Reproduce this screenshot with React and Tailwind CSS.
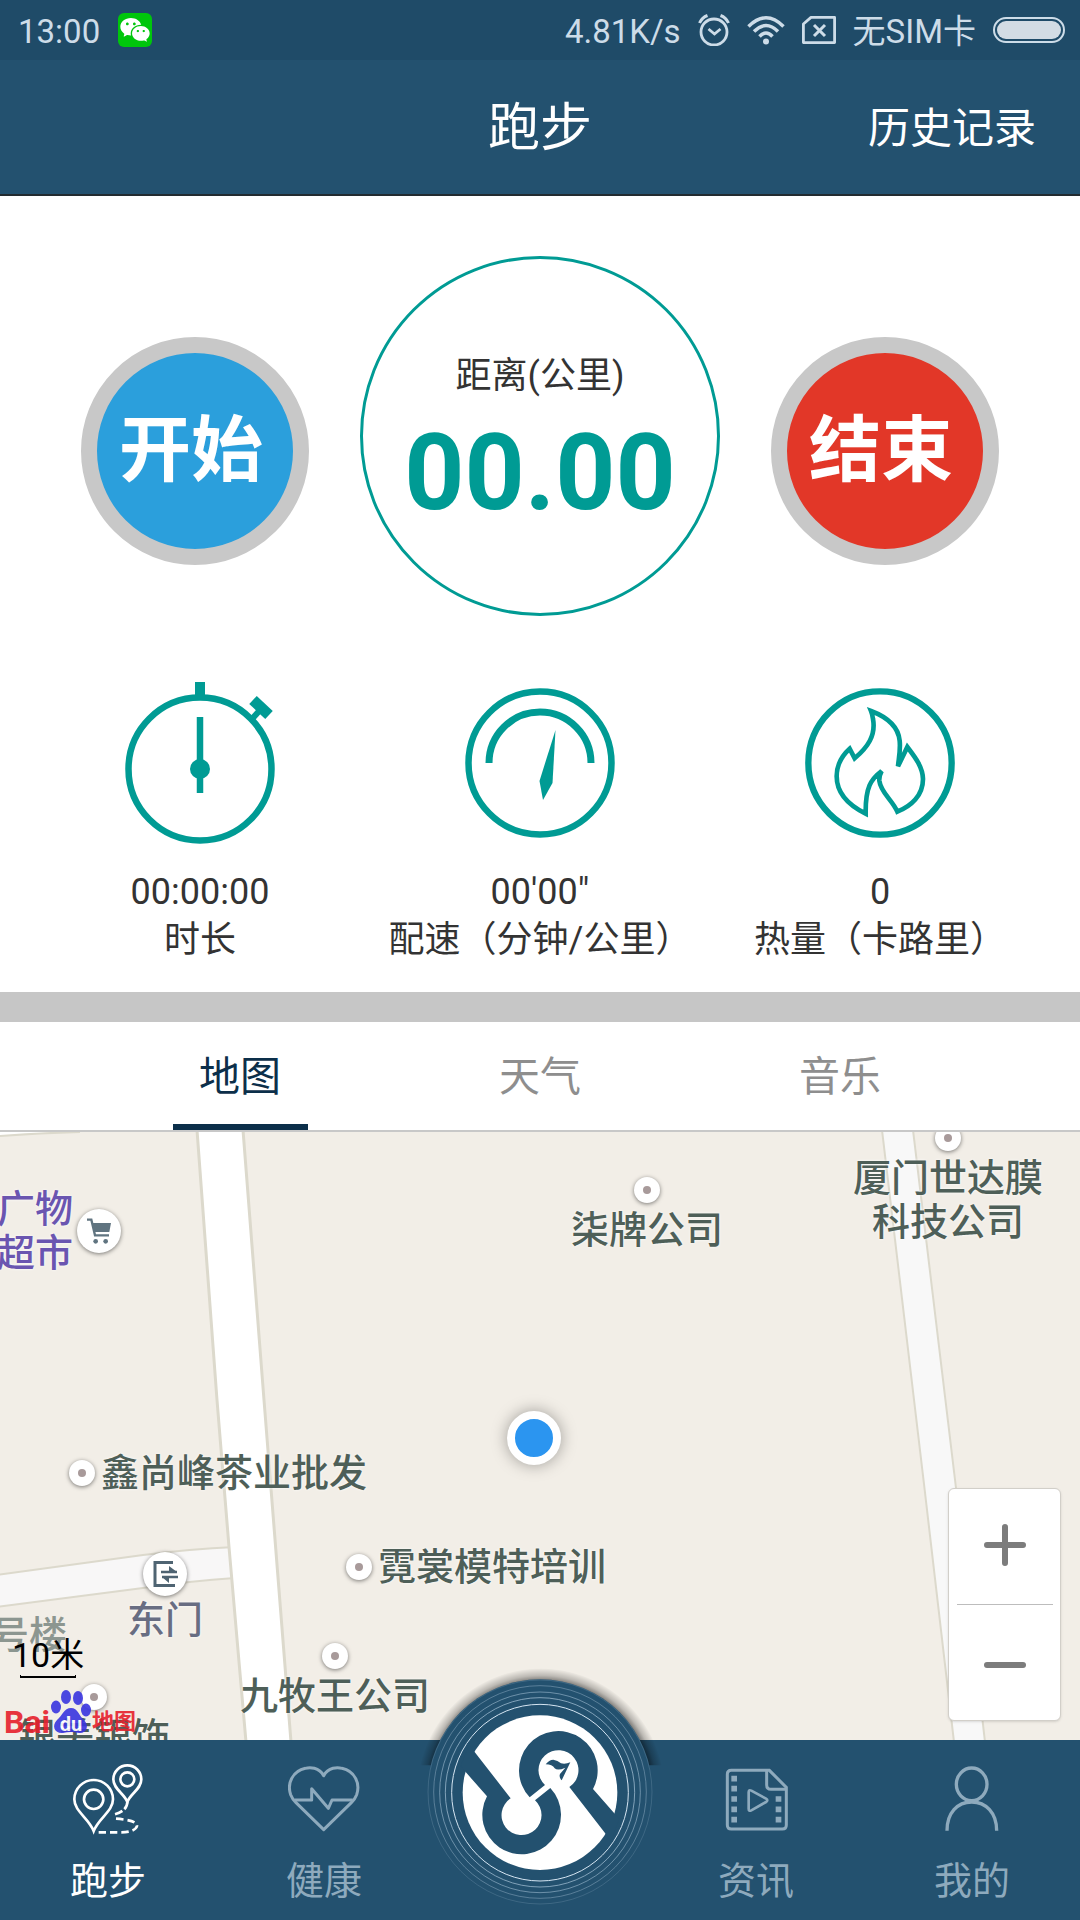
import React, { useState } from 'react';
import { RiWechatFill } from 'react-icons/ri';

const MAP_W = 1080;
const MAP_H = 608;

const places = [
  { name: ['广物', '超市'], x: 99, y: 99, side: 'left', kind: 'shop', color: 'text-[#6a55b0]' },
  { name: ['柒牌公司'], x: 647, y: 58, side: 'below' },
  { name: ['厦门世达膜', '科技公司'], x: 948, y: 6, side: 'below' },
  { name: ['鑫尚峰茶业批发'], x: 82, y: 341, side: 'right' },
  { name: ['霓裳模特培训'], x: 359, y: 435, side: 'right' },
  { name: ['九牧王公司'], x: 335, y: 524, side: 'below' },
  { name: ['东门'], x: 165, y: 442, side: 'below', kind: 'gate', color: 'text-[#686d82]' },
  { name: ['银美银饰'], x: 94, y: 565, side: 'below' },
];

const labelSides = {
  left: 'right-[26px] -translate-y-1/2 text-right',
  right: 'left-[19px] -translate-y-1/2',
  below: 'top-[18px] -translate-x-1/2 text-center',
  belowLarge: 'top-6 -translate-x-1/2 text-center',
};

function AlarmIcon() {
  return (
    <svg viewBox="0 0 32 32" className="size-8" fill="none" stroke="currentColor" strokeWidth="2.8">
      <circle cx="16" cy="18" r="13" />
      <path d="M10.500 15l6 5 6-5" />
      <path d="M1.5 9Q4 3.500 9.500 1.500M30.500 9Q28 3.500 22.500 1.500" strokeWidth="3" />
    </svg>
  );
}

function WifiIcon() {
  return (
    <svg viewBox="0 0 38 30" className="h-[30px] w-[38px]" fill="none" stroke="currentColor" strokeWidth="3.500">
      <path d="M1.500 11.500Q19-6 36.500 11.500" />
      <path d="M7 16.500Q19 4.500 31 16.500" />
      <path d="M12.500 21.500Q19 14.500 25.500 21.500" />
      <circle cx="19" cy="26.500" r="3" fill="currentColor" stroke="none" />
    </svg>
  );
}

function NoSimIcon() {
  return (
    <svg viewBox="0 0 34 28" className="h-7 w-[34px]" fill="none" stroke="currentColor" strokeWidth="2.8">
      <path d="M9 1.400H32.600V26.600H1.400V8Z" strokeLinejoin="round" />
      <path d="M12 9l11 11M23 9L12 20" strokeWidth="3" />
    </svg>
  );
}

function CartIcon() {
  return (
    <svg viewBox="0 0 72 78" className="h-[26px] w-6" fill="none" stroke="currentColor" strokeWidth="7">
      <path d="M0 5H13L24 52H66" />
      <path d="M14 15H72L67 42H21Z" fill="currentColor" stroke="none" />
      <circle cx="26" cy="70" r="7" fill="currentColor" stroke="none" />
      <circle cx="56" cy="70" r="7" fill="currentColor" stroke="none" />
    </svg>
  );
}

function StopwatchIcon() {
  return (
    <svg viewBox="0 0 168 168" className="size-[168px]" fill="none" stroke="#009b94" strokeWidth="6.500">
      <circle cx="84" cy="90" r="71.500" />
      <path d="M84 3V18" strokeWidth="10" />
      <path d="M84 38V114" />
      <circle cx="84" cy="90" r="10" fill="#009b94" stroke="none" />
      <path d="M135 41L145 30" strokeWidth="6" />
      <path d="M137 21L153 36" strokeWidth="11" />
    </svg>
  );
}

function GaugeIcon() {
  return (
    <svg viewBox="0 0 168 168" className="size-[168px]" fill="none" stroke="#009b94" strokeWidth="6.500">
      <circle cx="84" cy="84" r="71.500" />
      <path d="M33 84A51 51 0 0 1 135 84" strokeWidth="7" />
      <path d="M99.500 51L96.500 104L87 121L83.500 102Z" fill="#009b94" stroke="none" />
    </svg>
  );
}

function FlameIcon() {
  return (
    <svg viewBox="0 0 504 504" className="size-[168px]" fill="none" stroke="#009b94" strokeWidth="14">
      <circle cx="252" cy="252" r="215" strokeWidth="19" />
      <path d="M225 96C262 110 306 136 311 185C314 215 308 240 306 262L334 204C360 238 380 265 381 300C381 350 345 382 304 398C288 362 254 340 250 305Q249 290 257 276C225 300 208 325 209 404C160 380 122 345 122 292C122 255 140 228 161 209L176 238C215 205 240 170 231 120Q229 106 225 96Z" />
    </svg>
  );
}

function RouteIcon() {
  return (
    <svg viewBox="0 0 216 216" className="size-[72px]" fill="none" stroke="currentColor" strokeWidth="8">
      <path d="M65 204C50 165 7 145 7 109A58 58 0 0 1 123 109C123 145 80 165 65 204Z" />
      <circle cx="65" cy="109" r="29" />
      <path d="M166 117C157 92 124 78 124 49A42 42 0 0 1 208 49C208 78 175 92 166 117Z" />
      <circle cx="166" cy="49" r="21" />
      <path d="M166 117Q166 143 128 154" strokeDasharray="24 8" />
      <path d="M132 167Q196 172 195 189Q190 207 148 208L76 208" strokeDasharray="22 12" />
    </svg>
  );
}

function HeartIcon() {
  return (
    <svg viewBox="0 0 216 216" className="size-[72px]" fill="none" stroke="currentColor" strokeWidth="9" strokeLinejoin="round">
      <path d="M107 38C93 12 65 12 52 16C15 24-4 60 8 95Q13 108 24 119L107 200L190 119Q201 108 206 95C218 60 199 24 162 16C149 12 121 12 107 38Z" />
      <path d="M20 111H71V77L121 136L132 111H194" />
    </svg>
  );
}

function FilmIcon() {
  return (
    <svg viewBox="0 0 216 216" className="size-[72px]" fill="none" stroke="currentColor" strokeWidth="9">
      <path d="M148 22H34Q22 22 22 34V186Q22 198 34 198H187Q199 198 199 186V73Z" />
      <path d="M140 22V66Q140 79 153 79H199" />
      <path d="M86 88Q86 79 94 83L138 107Q146 112 138 117L94 142Q86 146 86 137Z" strokeWidth="8" />
      <path d="M34 47H51M34 77H51M34 108H51M34 139H51M34 170H51M167 108H184M167 139H184M167 170H184" strokeWidth="17" />
    </svg>
  );
}

function PersonIcon() {
  return (
    <svg viewBox="0 0 216 216" className="size-[72px]" fill="none" stroke="currentColor" strokeWidth="10">
      <ellipse cx="107" cy="64" rx="46" ry="49" />
      <path d="M33 203C33 150 64 117 107 117S182 150 182 203" />
    </svg>
  );
}

function BrandLogo() {
  // Drawn once and turned half a circle for the other hook
  const hook = 'M386 471A118 118 0 1 1 576 446L655 536L630 601L505 440A60 60 0 1 0 432 434Z';
  return (
    <svg viewBox="78 116 678 678" className="size-[226px] overflow-visible">
      <defs>
        <radialGradient id="discShadow" gradientUnits="userSpaceOnUse" cx="420" cy="455" r="372">
          <stop offset="0.880" stopColor="#000" stopOpacity="0.600" />
          <stop offset="0.940" stopColor="#000" stopOpacity="0.220" />
          <stop offset="1" stopColor="#000" stopOpacity="0" />
        </radialGradient>
      </defs>
      <path d="M57 375A372 372 0 0 1 783 375Z" fill="url(#discShadow)" />
      <circle cx="417" cy="455" r="338" fill="#23516f" />
      <g fill="none" stroke="#a9c4d8" strokeWidth="3">
        <circle cx="417" cy="455" r="336" opacity="0.200" />
        <circle cx="417" cy="455" r="319" opacity="0.400" />
        <circle cx="417" cy="456" r="301" opacity="0.550" />
        <circle cx="417" cy="456" r="284" opacity="0.700" />
        <circle cx="417" cy="457" r="265" stroke="#d5e5f2" />
      </g>
      <circle cx="417" cy="457" r="232" fill="#fff" />
      <path d={hook} fill="#23516f" />
      <path d={hook} fill="#23516f" transform="rotate(180 417 457)" />
      <path d="M434 372Q444 358 457 358Q470 360 480 369Q494 372 508 366L482 420Q473 410 477 401L493 382Q470 392 461 384Q454 372 434 372Z" fill="#23516f" />
    </svg>
  );
}

function Marker({ kind }) {
  const box = 'absolute flex -translate-x-1/2 -translate-y-1/2 items-center justify-center rounded-full bg-white shadow-[0_1px_4px_rgba(0,0,0,0.5)]';
  if (kind === 'shop') {
    return (
      <span className={`${box} size-11 text-[#607480]`}>
        <CartIcon />
      </span>
    );
  }
  if (kind === 'gate') {
    return (
      <span className={`${box} size-11 text-[#4f6472]`}>
        <svg viewBox="0 0 28 28" className="size-7" fill="none" stroke="currentColor" strokeWidth="3">
          <path d="M22 2.500H4V25.500H24" />
          <path d="M10 12H26M11 17H27" strokeWidth="2.500" />
          <path d="M18 6L26 12H18ZM18 17V23L11 17Z" fill="currentColor" stroke="none" />
        </svg>
      </span>
    );
  }
  return (
    <span className={`${box} size-[26px]`}>
      <span className="size-2 rounded-full bg-[#a89a9a]" />
    </span>
  );
}

function Place({ place }) {
  const side = place.kind === 'gate' ? 'belowLarge' : place.side;
  return (
    <div
      className="absolute"
      style={{ left: `${(place.x / MAP_W) * 100}%`, top: `${(place.y / MAP_H) * 100}%` }}
    >
      <Marker kind={place.kind} />
      <p
        className={`absolute text-[38px] leading-[44px] font-medium whitespace-nowrap [text-shadow:0_0_3px_#fff] ${labelSides[side]} ${place.color || 'text-[#4e5f58]'}`}
      >
        {place.name.map((line) => (
          <span key={line} className="block">{line}</span>
        ))}
      </p>
    </div>
  );
}

function BaiduMark() {
  return (
    <div className="flex items-end text-[#e6202c] opacity-90">
      <span className="text-[32px] leading-6 font-bold">Bai</span>
      <span className="relative flex h-11 w-[42px] items-end justify-center">
        <svg viewBox="0 0 42 44" className="absolute inset-0 size-full" fill="#3a35e0">
          <ellipse cx="6" cy="17" rx="5" ry="6.500" />
          <ellipse cx="16" cy="7" rx="5" ry="7" />
          <ellipse cx="28" cy="8" rx="5" ry="7" />
          <ellipse cx="36" cy="20" rx="5" ry="6.500" />
          <path d="M21 18C28 18 29 26 34 30C40 36 36 44 29 43Q21 41 13 43C5 44 1 36 7 30C12 26 14 18 21 18Z" />
        </svg>
        <span className="relative text-[20px] leading-5 font-bold text-white">du</span>
      </span>
      <span className="text-[22px] leading-6 font-bold">地图</span>
    </div>
  );
}

function MapView() {
  return (
    <section className="relative min-h-[608px] flex-1 overflow-hidden bg-[#f2eee7]">
      <svg viewBox="0 0 1080 608" preserveAspectRatio="none" className="absolute inset-0 size-full">
        <path d="M0 0H80Q40 0 0 4Z" fill="#fff" />
        <path d="M0 4Q40 1 80 0" fill="none" stroke="#dcd9cc" strokeWidth="2" />
        <path d="M-4 443L143 423Q190 417 235 415V446Q190 449 143 456L-4 475Z" fill="#f8f7f7" stroke="#dcd9cc" strokeWidth="2" />
        <path d="M882-2L924 352L954 610H985L956 356L913-2Z" fill="#f8f8f8" stroke="#dcd9cc" strokeWidth="2" />
        <path d="M197-2L217 268L229 415L246 610H291L264 268L243-2Z" fill="#fff" stroke="#dcd9cc" strokeWidth="3" />
      </svg>

      <p className="absolute top-[481px] -left-[9px] text-[38px] leading-[44px] font-medium text-[#8c9690]">号楼</p>
      {places.map((place) => (
        <Place key={place.name[0]} place={place} />
      ))}

      {/* Current position */}
      <span className="absolute top-[50.400%] left-[49.400%] size-[54px] -translate-x-1/2 -translate-y-1/2 rounded-full border-8 border-white bg-[#2b95f0] shadow-[0_0_16px_rgba(0,0,0,0.35)]" />

      {/* Scale and map provider */}
      <div className="absolute bottom-1.5 left-1">
        <div className="ml-2 w-fit text-[34px] leading-10 text-black">
          10米
          <div className="ml-2 h-[3px] w-14 border-x border-b-2 border-black" />
        </div>
        <div className="mt-3">
          <BaiduMark />
        </div>
      </div>

      <div className="absolute right-[19px] bottom-[19px] flex w-[113px] flex-col items-center rounded-md border border-[#d2cfc9] bg-white text-[#7c7c7c] shadow-sm">
        <button type="button" aria-label="放大" className="flex h-[115px] w-full items-center justify-center pb-1">
          <svg viewBox="0 0 42 42" className="size-[42px]" stroke="currentColor" strokeWidth="6" strokeLinecap="round">
            <path d="M3 21H39M21 3V39" />
          </svg>
        </button>
        <div className="h-px w-24 bg-[#bdbdbd]" />
        <button type="button" aria-label="缩小" className="flex h-[115px] w-full items-center justify-center pt-1">
          <svg viewBox="0 0 42 42" className="size-[42px]" stroke="currentColor" strokeWidth="6" strokeLinecap="round">
            <path d="M3 21H39" />
          </svg>
        </button>
      </div>
    </section>
  );
}

function StatusBar() {
  return (
    <div className="flex h-[60px] items-center justify-between bg-[#1f4b68] pr-[15px] pl-[18px] text-[33px] leading-none text-[#cddce8]">
      <div className="flex items-center gap-[18px]">
        <span className="pt-0.5">13:00</span>
        <span className="flex size-[34px] items-center justify-center rounded-md bg-[#00c60c] text-white">
          <RiWechatFill className="size-8" />
        </span>
      </div>
      <div className="flex items-center gap-[17px]">
        <span className="pt-0.5">4.81K/s</span>
        <AlarmIcon />
        <WifiIcon />
        <NoSimIcon />
        <span className="pt-0.5">无SIM卡</span>
        <span className="h-[26px] w-[72px] rounded-full border-2 border-current p-0.5">
          <span className="block size-full rounded-full bg-[#d3dce4]" />
        </span>
      </div>
    </div>
  );
}

const stats = [
  { icon: StopwatchIcon, value: '00:00:00', label: '时长' },
  { icon: GaugeIcon, value: '00\'00"', label: '配速（分钟/公里）' },
  { icon: FlameIcon, value: '0', label: '热量（卡路里）' },
];

const tabs = ['地图', '天气', '音乐'];

const navItems = [
  { icon: RouteIcon, label: '跑步' },
  { icon: HeartIcon, label: '健康' },
  null,
  { icon: FilmIcon, label: '资讯' },
  { icon: PersonIcon, label: '我的' },
];

export default function App() {
  const [tab, setTab] = useState('地图');
  const [page, setPage] = useState('跑步');

  const roundButton = 'mb-[51px] flex size-[228px] items-center justify-center rounded-full border-[16px] border-[#c8c8c8] pr-2 text-[72px] leading-none font-bold text-white';

  return (
    <div className="flex min-h-screen flex-col bg-white font-[Roboto,'Noto_Sans_CJK_SC',sans-serif] text-[#333]">
      <StatusBar />

      <header className="grid h-[136px] grid-cols-3 items-center border-b-2 border-[#222b30] bg-[#23516f] px-11 pt-1 text-white">
        <h1 className="col-start-2 text-center text-[52px] leading-none">跑步</h1>
        <a href="#history" className="justify-self-end text-[42px] leading-none">历史记录</a>
      </header>

      <main className="flex flex-1 flex-col">
        <section className="pt-[60px] pb-7">
          <div className="flex items-end justify-between px-[81px]">
            <button type="button" className={`${roundButton} bg-[#2b9fdc]`}>开始</button>
            <div className="flex size-[360px] flex-col items-center rounded-full border-[3px] border-[#009b94] pt-[93px]">
              <span className="text-4xl leading-[48px]">距离(公里)</span>
              <span className="mt-[18px] text-[105px] leading-[112px] font-bold text-[#009b94]">00.00</span>
            </div>
            <button type="button" className={`${roundButton} bg-[#e23728]`}>结束</button>
          </div>

          <div className="mt-[63px] grid grid-cols-3 px-[30px]">
            {stats.map(({ icon: Icon, value, label }) => (
              <div key={label} className="flex flex-col items-center text-4xl leading-[48px] whitespace-nowrap">
                <Icon />
                <span className="mt-[21px]">{value}</span>
                <span>{label}</span>
              </div>
            ))}
          </div>
        </section>

        <div className="h-[30px] bg-[#c6c6c6]" />

        <div role="tablist" className="grid h-[110px] grid-cols-3 border-b-2 border-[#c8c8c8] px-[90px]">
          {tabs.map((name) => (
            <button
              key={name}
              type="button"
              role="tab"
              aria-selected={tab === name}
              onClick={() => setTab(name)}
              className={`mx-auto w-[135px] border-b-6 pt-2 text-[41px] leading-none ${tab === name ? 'border-[#0c2f4a] text-[#0c2f4a]' : 'border-transparent text-[#8e8e8e]'}`}
            >
              {name}
            </button>
          ))}
        </div>

        <MapView />
      </main>

      <nav className="relative grid h-[180px] grid-cols-5 bg-[#23516f]">
        {navItems.map((item, i) =>
          item ? (
            <button
              key={item.label}
              type="button"
              onClick={() => setPage(item.label)}
              className={`flex flex-col items-center pt-[23px] text-[38px] leading-[52px] ${page === item.label ? 'text-white' : 'text-[#8eaabd]'}`}
            >
              <item.icon />
              <span className="mt-5">{item.label}</span>
            </button>
          ) : (
            <span key={i} />
          )
        )}
        <button type="button" aria-label="首页" className="absolute -top-[61px] left-1/2 -translate-x-1/2 rounded-full">
          <BrandLogo />
        </button>
      </nav>
    </div>
  );
}
